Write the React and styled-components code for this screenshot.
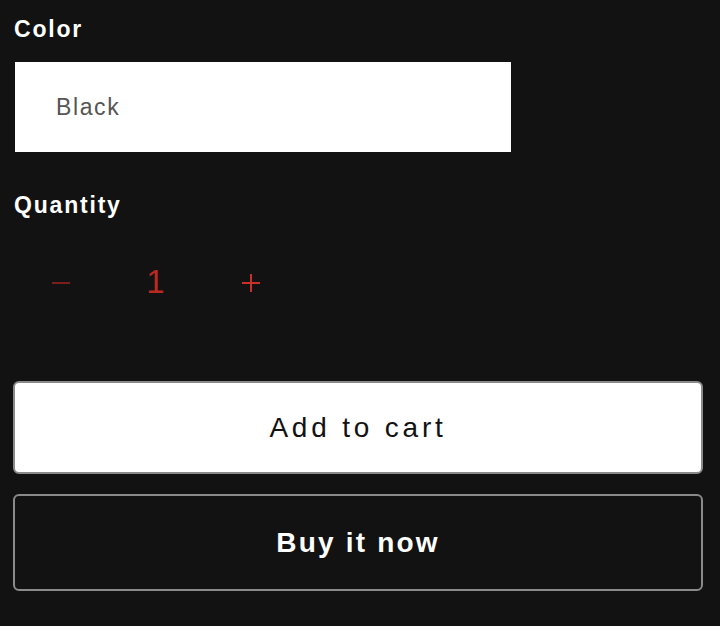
import React from 'react';
import styled, { createGlobalStyle } from 'styled-components';

const Global = createGlobalStyle`
  html, body {
    margin: 0;
    padding: 0;
    background: #121212;
  }
  body {
    font-family: "Liberation Sans", Arial, sans-serif;
    color: #fff;
  }
`;

const Page = styled.div`
  padding: 14px 17px 0 13px;
  display: flex;
  flex-direction: column;
`;

const Label = styled.div`
  font-size: 23px;
  font-weight: 700;
  letter-spacing: 1.8px;
  line-height: 30px;
  padding-left: 1px;
`;

const Select = styled.div`
  margin: 18px 0 0 2px;
  width: 496px;
  height: 90px;
  background: #fff;
  color: #555;
  display: flex;
  align-items: center;
  padding-left: 41px;
  box-sizing: border-box;
  font-size: 23px;
  letter-spacing: 1.6px;
`;

const QuantityLabel = styled(Label)`
  margin-top: 38px;
`;

const Stepper = styled.div`
  display: grid;
  grid-template-columns: repeat(3, 95px);
  height: 95px;
  margin-top: 15px;
`;

const StepCell = styled.div`
  display: flex;
  align-items: center;
  justify-content: center;
  color: ${p => p.$color};
`;

const Count = styled(StepCell)`
  font-size: 33px;
  padding-bottom: 2px;
`;

const Button = styled.div`
  height: ${p => p.$h}px;
  box-sizing: border-box;
  border: 2px solid #8a8a8a;
  border-radius: 6px;
  background: ${p => (p.$primary ? '#fff' : 'transparent')};
  color: ${p => (p.$primary ? '#121212' : '#fff')};
  display: flex;
  align-items: center;
  justify-content: center;
  font-size: 28px;
  font-weight: ${p => (p.$primary ? 400 : 700)};
  letter-spacing: ${p => (p.$primary ? 3.8 : 2.2)}px;
  margin-top: ${p => p.$mt}px;
`;

const Minus = () => (
  <svg width="18" height="2" viewBox="0 0 18 2">
    <rect width="18" height="2" fill="currentColor" />
  </svg>
);

const Plus = () => (
  <svg width="18" height="18" viewBox="0 0 18 18">
    <rect y="8" width="18" height="2" fill="currentColor" />
    <rect x="8" width="2" height="18" fill="currentColor" />
  </svg>
);

export default function App() {
  return (
    <>
      <Global />
      <Page>
        <Label>Color</Label>
        <Select>Black</Select>
        <QuantityLabel>Quantity</QuantityLabel>
        <Stepper>
          <StepCell $color="#7a1e19"><Minus /></StepCell>
          <Count $color="#b8291f">1</Count>
          <StepCell $color="#c9302a"><Plus /></StepCell>
        </Stepper>
        <Button $primary $h={93} $mt={51}>Add to cart</Button>
        <Button $h={97} $mt={20}>Buy it now</Button>
      </Page>
    </>
  );
}
